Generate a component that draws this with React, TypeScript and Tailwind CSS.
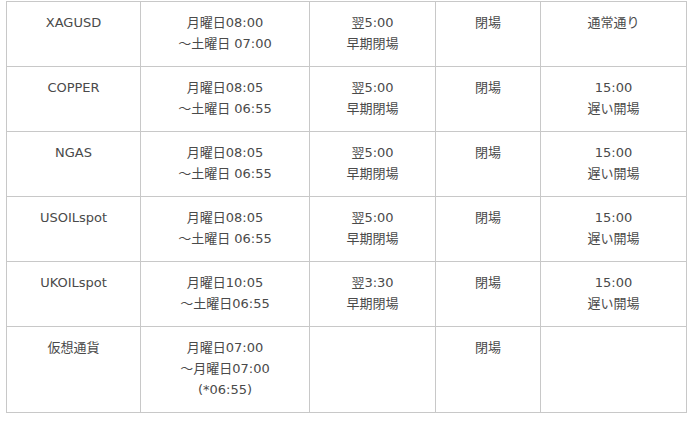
const rows: { name: string; hours: string[]; early: string[]; close: string; open: string[] }[] = [
  { name: 'XAGUSD', hours: ['月曜日08:00', '～土曜日 07:00'], early: ['翌5:00', '早期閉場'], close: '閉場', open: ['通常通り'] },
  { name: 'COPPER', hours: ['月曜日08:05', '～土曜日 06:55'], early: ['翌5:00', '早期閉場'], close: '閉場', open: ['15:00', '遅い開場'] },
  { name: 'NGAS', hours: ['月曜日08:05', '～土曜日 06:55'], early: ['翌5:00', '早期閉場'], close: '閉場', open: ['15:00', '遅い開場'] },
  { name: 'USOILspot', hours: ['月曜日08:05', '～土曜日 06:55'], early: ['翌5:00', '早期閉場'], close: '閉場', open: ['15:00', '遅い開場'] },
  { name: 'UKOILspot', hours: ['月曜日10:05', '～土曜日06:55'], early: ['翌3:30', '早期閉場'], close: '閉場', open: ['15:00', '遅い開場'] },
  { name: '仮想通貨', hours: ['月曜日07:00', '～月曜日07:00', '(*06:55)'], early: [], close: '閉場', open: [] },
];

function Lines({ items }: { items: string[] }) {
  return (
    <>
      {items.map((t, i) => (
        <div key={i}>{t}</div>
      ))}
    </>
  );
}

export default function App() {
  const cell = 'border border-[#c8c8c8] align-top text-center pt-[10px] px-2';
  return (
    <div className="w-[696px] h-[421px] bg-white pt-px pl-[6px] font-['DejaVu_Sans','Noto_Sans_CJK_JP',sans-serif] text-[13px] leading-[21px] text-[#4a4a4a]">
      <table className="border-collapse table-fixed w-[680px]">
        <colgroup>
          <col className="w-[134px]" />
          <col className="w-[169px]" />
          <col className="w-[126px]" />
          <col className="w-[105px]" />
          <col className="w-[146px]" />
        </colgroup>
        <tbody>
          {rows.map((r, i) => (
            <tr key={r.name} className={i === rows.length - 1 ? 'h-[86px]' : 'h-[65px]'}>
              <td className={cell}>{r.name}</td>
              <td className={cell}><Lines items={r.hours} /></td>
              <td className={cell}><Lines items={r.early} /></td>
              <td className={cell}>{r.close}</td>
              <td className={cell}><Lines items={r.open} /></td>
            </tr>
          ))}
        </tbody>
      </table>
    </div>
  );
}
